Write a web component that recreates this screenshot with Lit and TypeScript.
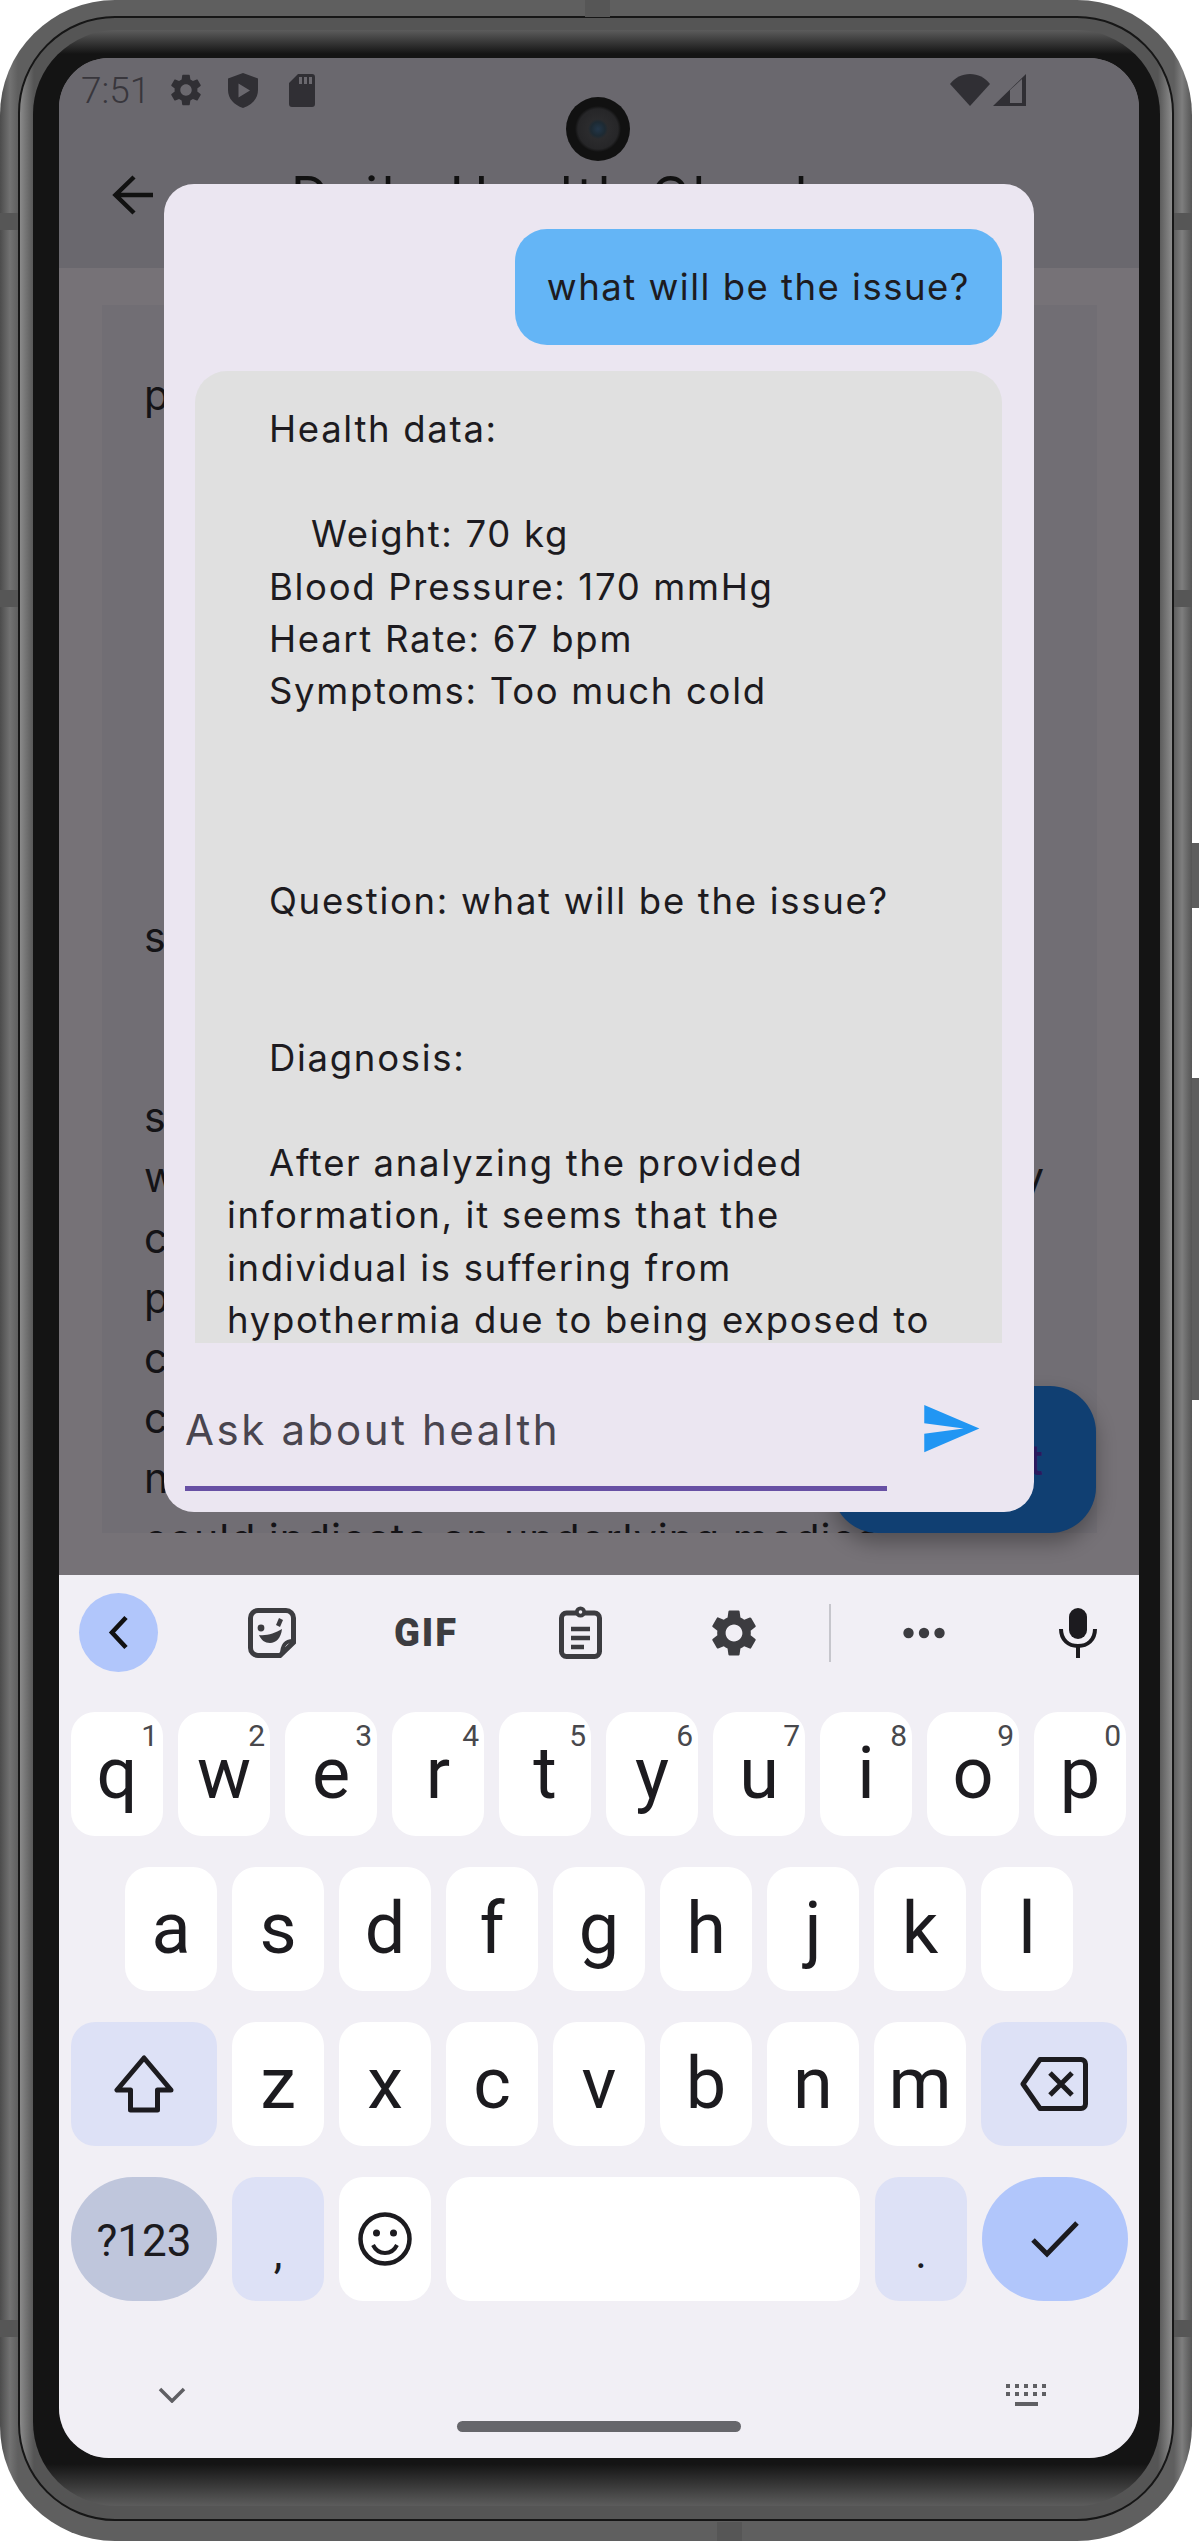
import { LitElement, html, css, svg } from "lit";
import { customElement } from "lit/decorators.js";

const GEAR = "M19.14 12.94c.04-.3.06-.61.06-.94 0-.32-.02-.64-.07-.94l2.03-1.58c.18-.14.23-.41.12-.61l-1.92-3.32c-.12-.22-.37-.29-.59-.22l-2.39.96c-.5-.38-1.03-.7-1.62-.94l-.36-2.54c-.04-.24-.24-.41-.48-.41h-3.84c-.24 0-.43.17-.47.41l-.36 2.54c-.59.24-1.13.57-1.62.94l-2.39-.96c-.22-.08-.47 0-.59.22L2.74 8.87c-.12.21-.08.47.12.61l2.03 1.58c-.05.3-.09.63-.09.94s.02.64.07.94l-2.03 1.58c-.18.14-.23.41-.12.61l1.92 3.32c.12.22.37.29.59.22l2.39-.96c.5.38 1.03.7 1.62.94l.36 2.54c.05.24.24.41.48.41h3.84c.24 0 .44-.17.47-.41l.36-2.54c.59-.24 1.13-.56 1.62-.94l2.39.96c.22.08.47 0 .59-.22l1.92-3.32c.12-.22.07-.47-.12-.61l-2.01-1.58zM12 15.6c-1.98 0-3.6-1.62-3.6-3.6s1.62-3.6 3.6-3.6 3.6 1.62 3.6 3.6-1.62 3.6-3.6 3.6z";

const gear = (size: number) => html`<svg width=${size} height=${size} viewBox="0 0 24 24"><path fill="currentColor" d=${GEAR} /></svg>`;

// one row per line of the answer, indent in px
const ANSWER: [string, number][] = [
  ["Health data:", 42],
  ["", 0],
  ["Weight: 70 kg", 84],
  ["Blood Pressure: 170 mmHg", 42],
  ["Heart Rate: 67 bpm", 42],
  ["Symptoms: Too much cold", 42],
  ["", 0],
  ["", 0],
  ["", 0],
  ["Question: what will be the issue?", 42],
  ["", 0],
  ["", 0],
  ["Diagnosis:", 42],
  ["", 0],
  ["After analyzing the provided", 42],
  ["information, it seems that the", 0],
  ["individual is suffering from", 0],
  ["hypothermia due to being exposed to", 0],
];

const BODY = [
  "pressure: 170 mmHg",
  "", "", "", "", "", "", "", "",
  "symptoms",
  "", "",
  "symptoms of too much cold",
  "with high blood pressure may",
  "cause strain on the heart. The",
  "patient should stay warm and",
  "consult a doctor. Persistent",
  "cold and high readings may",
  "need further review, as they",
  "could indicate an underlying medical issue",
];

@customElement("chat-dialog")
class ChatDialog extends LitElement {
  static styles = css`
    :host {
      position: absolute;
      top: 126px;
      left: 105px;
      width: 870px;
      height: 1328px;
      background: #ebe6f1;
      border-radius: 30px;
      display: flex;
      flex-direction: column;
      font-family: Inter, "Open Sans", sans-serif;
      color: #1d1b20;
    }
    .list {
      height: 1159px;
      padding: 45px 32px 0 31px;
      box-sizing: border-box;
      overflow: hidden;
      display: flex;
      flex-direction: column;
      gap: 26px;
      flex: none;
    }
    .bubble {
      font-size: 36.5px;
      line-height: 52.4px;
      padding: 32px;
      border-radius: 32px;
      flex: none;
    }
    .me {
      align-self: flex-end;
      background: #64b5f6;
      white-space: nowrap;
      letter-spacing: 1.5px;
    }
    .bot {
      background: #e0e0e0;
      letter-spacing: 1.7px;
    }
    .line {
      height: 52.4px;
      white-space: pre;
    }
    .input {
      display: flex;
      align-items: flex-start;
      padding: 0 0 0 21px;
    }
    .field {
      width: 702px;
      height: 148px;
      box-sizing: border-box;
      border-bottom: 5px solid #6750a4;
      padding-top: 57px;
      font-size: 42px;
      line-height: 60px;
      color: #49454f;
      letter-spacing: 2.6px;
    }
    .send {
      margin: 54px 0 0 32px;
      color: #2196f3;
    }
  `;

  render() {
    return html`
      <div class="list">
        <div class="bubble me">what will be the issue?</div>
        <div class="bubble bot">
          ${ANSWER.map(([text, indent]) => html`<div class="line" style="padding-left:${indent}px">${text}</div>`)}
        </div>
      </div>
      <div class="input">
        <div class="field">Ask about health</div>
        <svg class="send" width="63" height="63" viewBox="0 0 24 24"><path fill="currentColor" d="M2.01 21 23 12 2.01 3 2 10l15 2-15 2z" /></svg>
      </div>
    `;
  }
}

@customElement("phone-keyboard")
class PhoneKeyboard extends LitElement {
  static styles = css`
    :host {
      display: block;
      height: 883px;
      flex: none;
      background: #f1eff5;
      padding-top: 18px;
      box-sizing: border-box;
      overflow: hidden;
      font-family: Roboto, "Liberation Sans", sans-serif;
      color: #1c1b1f;
    }
    .tools {
      display: flex;
      align-items: center;
      height: 79px;
      padding-left: 20px;
      color: #3c3c40;
    }
    .pill {
      flex: none;
      width: 79px;
      height: 79px;
      border-radius: 50%;
      background: #b1c6fb;
      display: flex;
      align-items: center;
      justify-content: center;
      margin-right: 37px;
    }
    .cell {
      flex: none;
      width: 154px;
      display: flex;
      align-items: center;
      justify-content: center;
    }
    .gif {
      font-weight: 900;
      font-size: 38px;
      line-height: 1;
      letter-spacing: 2px;
    }
    .sep {
      flex: none;
      width: 2px;
      height: 58px;
      background: #c6c6cc;
      margin: 0 16px 0 18px;
    }
    .rows {
      display: flex;
      flex-direction: column;
      gap: 31px;
      padding: 40px 12px 0;
    }
    .row {
      display: flex;
      gap: 15px;
      height: 124px;
    }
    .row.inset {
      padding-left: 54px;
    }
    .key {
      position: relative;
      flex: none;
      width: 92px;
      border-radius: 24px;
      background: #fff;
      display: flex;
      align-items: center;
      justify-content: center;
      font-size: 72px;
      line-height: 1;
    }
    .num {
      position: absolute;
      top: 9px;
      right: 5px;
      font-size: 30px;
      color: #48484c;
    }
    .wide {
      width: 146px;
    }
    .fn {
      background: #dde1f6;
    }
    .round {
      border-radius: 62px;
    }
    .sym {
      background: #bfc6dc;
      font-size: 44px;
      padding-top: 3px;
      box-sizing: border-box;
    }
    .enter {
      background: #b1c6fb;
    }
    .punct {
      font-size: 44px;
      align-items: flex-end;
      padding-bottom: 26px;
      box-sizing: border-box;
    }
    .space {
      width: 414px;
    }
    .foot {
      padding-top: 83px;
      display: flex;
      flex-direction: column;
    }
    .nav {
      display: flex;
      justify-content: space-between;
      align-items: center;
      height: 22px;
      padding: 0 92px 0 99px;
      color: #5f5f63;
    }
    .home {
      width: 284px;
      height: 11px;
      border-radius: 6px;
      background: #66666b;
      margin: 15px auto 0;
    }
  `;

  key(letter: string, num?: string) {
    return html`<div class="key">${letter}${num ? html`<span class="num">${num}</span>` : ""}</div>`;
  }

  render() {
    const top = "qwertyuiop".split("");
    return html`
      <div class="tools">
        <div class="pill">
          <svg width="22" height="35" viewBox="0 0 22 35"><path d="M18 2.5 4 17.5l14 15" fill="none" stroke="#111" stroke-width="4.6" /></svg>
        </div>
        <div class="cell">
          <svg width="48" height="50" viewBox="0 0 48 50">
            <path d="M10 2.5h28a7.500 7.500 0 0 1 7.500 7.500v24.500L32 47.500H10A7.500 7.500 0 0 1 2.500 40V10A7.500 7.500 0 0 1 10 2.500z" fill="none" stroke="currentColor" stroke-width="5" />
            <path d="M45 33c-7 0-11 3-11 14" fill="none" stroke="currentColor" stroke-width="4" />
            <circle cx="13" cy="20" r="3.400" fill="currentColor" />
            <path d="M28 17l3-7 4 2-3 7z" fill="currentColor" />
            <path d="M11 27c8 1 16-2 23-6-1 9-6 14-12 14-5 0-9-3-11-8z" fill="currentColor" />
          </svg>
        </div>
        <div class="cell"><span class="gif">GIF</span></div>
        <div class="cell">
          <svg width="43" height="53" viewBox="0 0 43 53">
            <rect x="2.500" y="7" width="38" height="43.500" rx="5" fill="none" stroke="currentColor" stroke-width="5" />
            <circle cx="21.500" cy="6" r="5.500" fill="currentColor" />
            <circle cx="21.500" cy="6" r="1.800" fill="#f1eff5" />
            <path d="M12 23h19M12 32h19M12 41h13" fill="none" stroke="currentColor" stroke-width="4.500" />
          </svg>
        </div>
        <div class="cell">${gear(56)}</div>
        <div class="sep"></div>
        <div class="cell">
          <svg width="42" height="12" viewBox="0 0 42 12"><circle cx="5.500" cy="6" r="5.200" fill="currentColor" /><circle cx="21" cy="6" r="5.200" fill="currentColor" /><circle cx="36.500" cy="6" r="5.200" fill="currentColor" /></svg>
        </div>
        <div class="cell">
          <svg width="38" height="50" viewBox="0 0 38 50">
            <rect x="10" y="0" width="18" height="31" rx="9" fill="#1c1b1f" />
            <path d="M2 21c0 11 7.500 17 17 17s17-6 17-17M19 37v13" fill="none" stroke="#1c1b1f" stroke-width="4" />
          </svg>
        </div>
      </div>

      <div class="rows">
        <div class="row">${top.map((l, i) => this.key(l, String((i + 1) % 10)))}</div>
        <div class="row inset">${"asdfghjkl".split("").map((l) => this.key(l))}</div>
        <div class="row">
          <div class="key wide fn">
            <svg width="60" height="58" viewBox="0 0 60 58"><path d="M30 3 3 35h13.500v20h27V35H57z" fill="none" stroke="#1c1b1f" stroke-width="5" stroke-linejoin="round" /></svg>
          </div>
          ${"zxcvbnm".split("").map((l) => this.key(l))}
          <div class="key wide fn">
            <svg width="68" height="54" viewBox="0 0 68 54">
              <path d="M20 2.500h41a4.500 4.500 0 0 1 4.500 4.500v40a4.500 4.500 0 0 1-4.500 4.500H20L3 27z" fill="none" stroke="#1c1b1f" stroke-width="5" stroke-linejoin="round" />
              <path d="M30 16l22 22M52 16 30 38" fill="none" stroke="#1c1b1f" stroke-width="5" />
            </svg>
          </div>
        </div>
        <div class="row">
          <div class="key wide round sym">?123</div>
          <div class="key fn punct">,</div>
          <div class="key">
            <svg width="54" height="54" viewBox="0 0 54 54">
              <circle cx="27" cy="27" r="24.500" fill="none" stroke="#1c1b1f" stroke-width="4.500" />
              <circle cx="18.500" cy="21" r="3.500" fill="#1c1b1f" />
              <circle cx="35.500" cy="21" r="3.500" fill="#1c1b1f" />
              <path d="M15 33c3 6 7.500 8 12 8s9-2 12-8" fill="none" stroke="#1c1b1f" stroke-width="4" />
            </svg>
          </div>
          <div class="key space"></div>
          <div class="key fn punct">.</div>
          <div class="key wide round enter">
            <svg width="50" height="38" viewBox="0 0 50 38"><path d="M3 20l14 14L47 3" fill="none" stroke="#1c1b1f" stroke-width="5" /></svg>
          </div>
        </div>
      </div>

      <div class="foot">
        <div class="nav">
          <svg width="28" height="16" viewBox="0 0 28 16"><path d="M2 2l12 12L26 2" fill="none" stroke="currentColor" stroke-width="3.500" /></svg>
          <svg width="41" height="22" viewBox="0 0 41 22">
            ${[0, 9, 18, 27, 36].map((x) => svg`<rect x=${x} y="0" width="4" height="4" fill="currentColor" /><rect x=${x} y="8" width="4" height="4" fill="currentColor" />`)}
            <rect x="9" y="18" width="23" height="4" fill="currentColor" />
          </svg>
        </div>
        <div class="home"></div>
      </div>
    `;
  }
}

@customElement("app-root")
class AppRoot extends LitElement {
  static styles = css`
    :host {
      display: block;
      width: 1200px;
      height: 2541px;
      position: relative;
      background: #fff;
    }
    .frame {
      position: relative;
      width: 1192px;
      height: 2541px;
      box-sizing: border-box;
      padding: 16px 18px 20px 18px;
      border-radius: 115px;
      background: linear-gradient(90deg, #4c4c4c 0, #727272 10px, #5f5f5f 18px, #5f5f5f calc(100% - 18px), #7e7e7e calc(100% - 10px), #555 100%);
    }
    .rim {
      height: 100%;
      box-sizing: border-box;
      border: 2px solid #161616;
      border-radius: 97px;
      padding: 12px 12px 13px 13px;
      background: linear-gradient(90deg, #8a8a8a, #555 14px, #555 calc(100% - 14px), #8c8c8c);
    }
    .bezel {
      height: 100%;
      box-sizing: border-box;
      border-radius: 84px;
      padding: 28px 21px 48px 26px;
      background: linear-gradient(180deg, #5c5c5c 0, #141414 24px, #141414 calc(100% - 42px), #5c5c5c 100%);
    }
    .screen {
      position: relative;
      width: 1080px;
      height: 2400px;
      display: flex;
      flex-direction: column;
      border-radius: 50px;
      overflow: hidden;
      background: #767277;
      font-family: Inter, "Open Sans", sans-serif;
    }
    .app {
      position: relative;
      flex: 1;
      overflow: hidden;
    }
    .head {
      background: #6a686e;
      height: 210px;
    }
    .status {
      display: flex;
      justify-content: space-between;
      align-items: center;
      height: 64px;
      padding: 0 113px 0 22px;
      color: #302f34;
    }
    .group {
      display: flex;
      align-items: center;
    }
    .time {
      font-family: Roboto, sans-serif;
      font-size: 37px;
      font-weight: 300;
      color: #38363c;
      margin-right: 17px;
    }
    .shield {
      margin-left: 23px;
    }
    .sd {
      margin-left: 31px;
    }
    .signal {
      margin-left: 3px;
    }
    .bar {
      display: flex;
      align-items: center;
      height: 146px;
      padding-left: 53px;
      color: #111;
    }
    .title {
      margin-left: 138px;
      font-size: 52px;
      letter-spacing: 3.8px;
      white-space: nowrap;
    }
    .card {
      margin: 37px 42px 0 43px;
      height: 1228px;
      padding: 60px 0 0 42px;
      box-sizing: border-box;
      overflow: hidden;
      background: #716e74;
      color: #141316;
      font-size: 41px;
      line-height: 60.2px;
    }
    .text-line {
      height: 60.2px;
      white-space: nowrap;
      letter-spacing: 1px;
    }
    .text-line.full {
      width: 901px;
      white-space: normal;
      text-align-last: justify;
    }
    .fab {
      position: absolute;
      right: 43px;
      bottom: 42px;
      width: 264px;
      height: 147px;
      box-sizing: border-box;
      display: flex;
      align-items: center;
      justify-content: flex-end;
      padding-right: 53px;
      border-radius: 46px;
      background: #103f72;
      color: #2a1a5e;
      font-size: 42px;
      font-weight: 500;
      box-shadow: 0 10px 20px rgba(0, 0, 0, 0.3);
    }
    .camera {
      position: absolute;
      left: 507px;
      top: 39px;
      width: 64px;
      height: 64px;
      border-radius: 50%;
      background: radial-gradient(circle at 50% 50%, #23374a 0, #1d2a33 7px, #2b2b2d 10px, #262628 20px, #111 23px);
    }
    .btn {
      position: absolute;
      left: 1192px;
      width: 7px;
      background: #5e5e5e;
    }
    .power {
      top: 843px;
      height: 65px;
    }
    .volume {
      top: 1078px;
      height: 322px;
    }
    .band {
      position: absolute;
      background: #565656;
    }
    .side {
      width: 18px;
      height: 17px;
    }
    .band.left {
      left: 0;
    }
    .band.right {
      right: 0;
    }
    .top {
      top: 0;
      left: 585px;
      width: 25px;
      height: 17px;
    }
    .bottom {
      bottom: 0;
      left: 717px;
      width: 25px;
      height: 19px;
    }
  `;

  render() {
    return html`
      <div class="frame">
        <div class="band side left" style="top:213px"></div>
        <div class="band side left" style="top:590px"></div>
        <div class="band side left" style="top:2320px"></div>
        <div class="band side right" style="top:213px"></div>
        <div class="band side right" style="top:590px"></div>
        <div class="band side right" style="top:2320px"></div>
        <div class="band top"></div>
        <div class="band bottom"></div>
        <div class="rim">
          <div class="bezel">
            <div class="screen">
              <div class="app">
                <div class="head">
                  <div class="status">
                    <div class="group">
                      <span class="time">7:51</span>
                      ${gear(38)}
                      <svg class="shield" width="30" height="35" viewBox="0 0 30 35"><path fill-rule="evenodd" fill="currentColor" d="M15 0 30 5.500V17c0 8.500-6 15-15 18C6 32 0 25.500 0 17V5.500zM10.500 10.500v14l11.500-7z" /></svg>
                      <svg class="sd" width="26" height="33" viewBox="0 0 26 33"><path fill-rule="evenodd" fill="currentColor" d="M9 0h14a3 3 0 0 1 3 3v27a3 3 0 0 1-3 3H3a3 3 0 0 1-3-3V9zM10 3v7h3V3zM15 3v7h3V3zM20 3v7h3V3z" /></svg>
                    </div>
                    <div class="group">
                      <svg width="40" height="32" viewBox="0 0 40 32"><path fill="currentColor" d="M0 10C5 3.500 12 0 20 0s15 3.500 20 10L20 32z" /></svg>
                      <svg class="signal" width="33" height="32" viewBox="0 0 33 32"><path fill-rule="evenodd" fill="currentColor" d="M0 32 33 0v32zM17 16v13h12V5z" /></svg>
                    </div>
                  </div>
                  <div class="bar">
                    <svg width="41" height="40" viewBox="0 0 41 40"><path d="M41 20H4M22 2 3.500 20 22 38" fill="none" stroke="currentColor" stroke-width="4.500" /></svg>
                    <span class="title">Daily Health Check</span>
                  </div>
                </div>
                <div class="card">
                  ${BODY.map((line, i) => html`<div class="text-line ${i === 13 ? "full" : ""}">${line}</div>`)}
                </div>
                <div class="fab">Chat</div>
                <chat-dialog></chat-dialog>
                <div class="camera"></div>
              </div>
              <phone-keyboard></phone-keyboard>
            </div>
          </div>
        </div>
      </div>
      <div class="btn power"></div>
      <div class="btn volume"></div>
    `;
  }
}
